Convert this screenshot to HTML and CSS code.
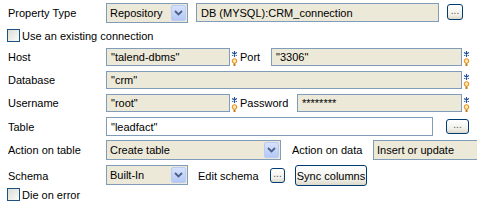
FILE: index.html
```html
<!DOCTYPE html>
<html>
<head>
<meta charset="utf-8">
<link rel="stylesheet" href="styles.css">
</head>
<body>
<div class="form">
  <div class="row r1">
    <div class="label">Property Type</div>
    <div class="select w82"><span class="val">Repository</span><span class="arrow"><svg width="9" height="6" viewBox="0 0 9 6"><path d="M1 1l3.5 3.5L8 1" fill="none" stroke="#4d6185" stroke-width="1.8"/></svg></span></div>
    <div class="field ro db">DB (MYSQL):CRM_connection</div>
    <button class="btn dots b16">...</button>
  </div>
  <div class="row check c1"><span class="box"></span><span class="ctext">Use an existing connection</span></div>
  <div class="row r18 mt6">
    <div class="label">Host</div>
    <div class="field ro w124">"talend-dbms"</div>
    <span class="req"><svg width="7" height="18" viewBox="0 0 7 18"><path d="M3.5 3v6M1 4.5l5 3M6 4.5l-5 3" stroke="#1f4f9b" stroke-width="1.1" fill="none"/><circle cx="3.5" cy="13" r="2.3" fill="#ffe9a8" stroke="#e8891a" stroke-width="1"/><rect x="2.5" y="15.5" width="2" height="2.5" fill="#c77a1a"/></svg></span>
    <div class="label2 lport">Port</div>
    <div class="field ro wport">"3306"</div>
    <span class="req"><svg width="7" height="18" viewBox="0 0 7 18"><path d="M3.5 3v6M1 4.5l5 3M6 4.5l-5 3" stroke="#1f4f9b" stroke-width="1.1" fill="none"/><circle cx="3.5" cy="13" r="2.3" fill="#ffe9a8" stroke="#e8891a" stroke-width="1"/><rect x="2.5" y="15.5" width="2" height="2.5" fill="#c77a1a"/></svg></span>
  </div>
  <div class="row r18 mt5">
    <div class="label">Database</div>
    <div class="field ro wdb">"crm"</div>
    <span class="req"><svg width="7" height="18" viewBox="0 0 7 18"><path d="M3.5 3v6M1 4.5l5 3M6 4.5l-5 3" stroke="#1f4f9b" stroke-width="1.1" fill="none"/><circle cx="3.5" cy="13" r="2.3" fill="#ffe9a8" stroke="#e8891a" stroke-width="1"/><rect x="2.5" y="15.5" width="2" height="2.5" fill="#c77a1a"/></svg></span>
  </div>
  <div class="row r18 mt5">
    <div class="label">Username</div>
    <div class="field ro w124">"root"</div>
    <span class="req"><svg width="7" height="18" viewBox="0 0 7 18"><path d="M3.5 3v6M1 4.5l5 3M6 4.5l-5 3" stroke="#1f4f9b" stroke-width="1.1" fill="none"/><circle cx="3.5" cy="13" r="2.3" fill="#ffe9a8" stroke="#e8891a" stroke-width="1"/><rect x="2.5" y="15.5" width="2" height="2.5" fill="#c77a1a"/></svg></span>
    <div class="label2 lpass">Password</div>
    <div class="field ro wpass">********</div>
    <span class="req"><svg width="7" height="18" viewBox="0 0 7 18"><path d="M3.5 3v6M1 4.5l5 3M6 4.5l-5 3" stroke="#1f4f9b" stroke-width="1.1" fill="none"/><circle cx="3.5" cy="13" r="2.3" fill="#ffe9a8" stroke="#e8891a" stroke-width="1"/><rect x="2.5" y="15.5" width="2" height="2.5" fill="#c77a1a"/></svg></span>
  </div>
  <div class="row r19 mt5">
    <div class="label">Table</div>
    <div class="field wtable">"leadfact"</div>
    <button class="btn dots btable">...</button>
  </div>
  <div class="row r20 mt4">
    <div class="label">Action on table</div>
    <div class="select w175"><span class="val">Create table</span><span class="arrow"><svg width="9" height="6" viewBox="0 0 9 6"><path d="M1 1l3.5 3.5L8 1" fill="none" stroke="#4d6185" stroke-width="1.8"/></svg></span></div>
    <div class="label2 ldata">Action on data</div>
    <div class="select wdata"><span class="val">Insert or update</span></div>
  </div>
  <div class="row r21 mt5">
    <div class="label">Schema</div>
    <div class="select w82 sch"><span class="val">Built-In</span><span class="arrow"><svg width="9" height="6" viewBox="0 0 9 6"><path d="M1 1l3.5 3.5L8 1" fill="none" stroke="#4d6185" stroke-width="1.8"/></svg></span></div>
    <span class="edit">Edit schema</span>
    <button class="btn dots b15">...</button>
    <button class="btn sync">Sync columns</button>
  </div>
  <div class="row check c2"><span class="box"></span><span class="ctext">Die on error</span></div>
</div>
</body>
</html>
```
FILE: styles.css
```css
* { box-sizing: border-box; }
html, body { margin: 0; padding: 0; }
body {
  width: 477px;
  height: 211px;
  overflow: hidden;
  background: #fff;
  color: #000;
  font: 11px "Liberation Sans", Arial, sans-serif;
}
.form { padding: 3px 0 0 7px; width: 477px; overflow: hidden; }
.row { display: flex; align-items: center; white-space: nowrap; }
.label { width: 99px; padding-left: 1px; flex: none; }
.label2 { flex: none; }
.r1 { height: 20px; align-items: flex-start; }
.r18 { height: 18px; }
.r19 { height: 19px; }
.r20 { height: 20px; }
.r21 { height: 21px; }
.mt4 { margin-top: 4px; }
.mt5 { margin-top: 5px; }
.mt6 { margin-top: 6px; }
.r1 .label { align-self: center; }

.field {
  height: 100%;
  border: 1px solid #7f9db9;
  background: #fff;
  padding: 0 4px;
  display: flex;
  align-items: center;
  flex: none;
  overflow: hidden;
}
.field.ro { background: #ece9d8; }
.db { height: 19px; width: 243px; margin-left: 8px; }
.w124 { width: 124px; }
.wport { width: 191px; }
.wdb { width: 356px; }
.wpass { width: 165px; }
.wtable { width: 327px; }

.req { width: 7px; height: 18px; margin-left: 1px; flex: none; display: block; }
.req svg { display: block; }
.lport { width: 31px; margin-left: 2px; }
.lpass { width: 57px; margin-left: 2px; }

.select {
  height: 20px;
  border: 1px solid #7f9db9;
  background: #ece9d8;
  display: flex;
  align-items: center;
  flex: none;
  padding-left: 3px;
}
.select .val { flex: 1; overflow: hidden; }
.select .arrow {
  width: 15px;
  height: 16px;
  margin: 0 1px 0 0;
  border: 1px solid #b9cbf3;
  border-radius: 2px;
  background: linear-gradient(#d6e2fd, #b4c8f6);
  display: flex;
  align-items: center;
  justify-content: center;
}
.select .arrow svg { display: block; }
.w82 { width: 82px; }
.w175 { width: 175px; }
.wdata { width: 105px; flex-shrink: 0; }
.ldata { margin-left: 11px; width: 81px; }
.sch { align-self: flex-start; }

.btn {
  font: 11px "Liberation Sans", Arial, sans-serif;
  border: 1px solid #003c74;
  border-radius: 3px;
  background: linear-gradient(#ffffff, #f0efe8 70%, #dcd9c9);
  color: #000;
  padding: 0;
  margin: 0;
  flex: none;
  display: flex;
  align-items: center;
  justify-content: center;
}
.dots { color: #555; font-size: 10px; line-height: 1; padding-bottom: 3px; letter-spacing: 0; }
.b16 { width: 16px; height: 16px; margin-left: 8px; margin-top: 1px; }
.btable { width: 23px; height: 15px; margin-left: 13px; }
.b15 { width: 15px; height: 15px; margin-left: 12px; }
.sync { width: 72px; height: 21px; margin-left: 10px; }
.edit { margin-left: 10px; width: 60px; }

.check { height: 13px; }
.c1 { margin-top: 6px; }
.c2 { margin-top: 2px; }
.box {
  width: 13px;
  height: 13px;
  border: 1px solid #1c5180;
  background: linear-gradient(135deg, #dcdcd7, #fbfbf9);
  flex: none;
}
.ctext { margin-left: 2px; }
```
